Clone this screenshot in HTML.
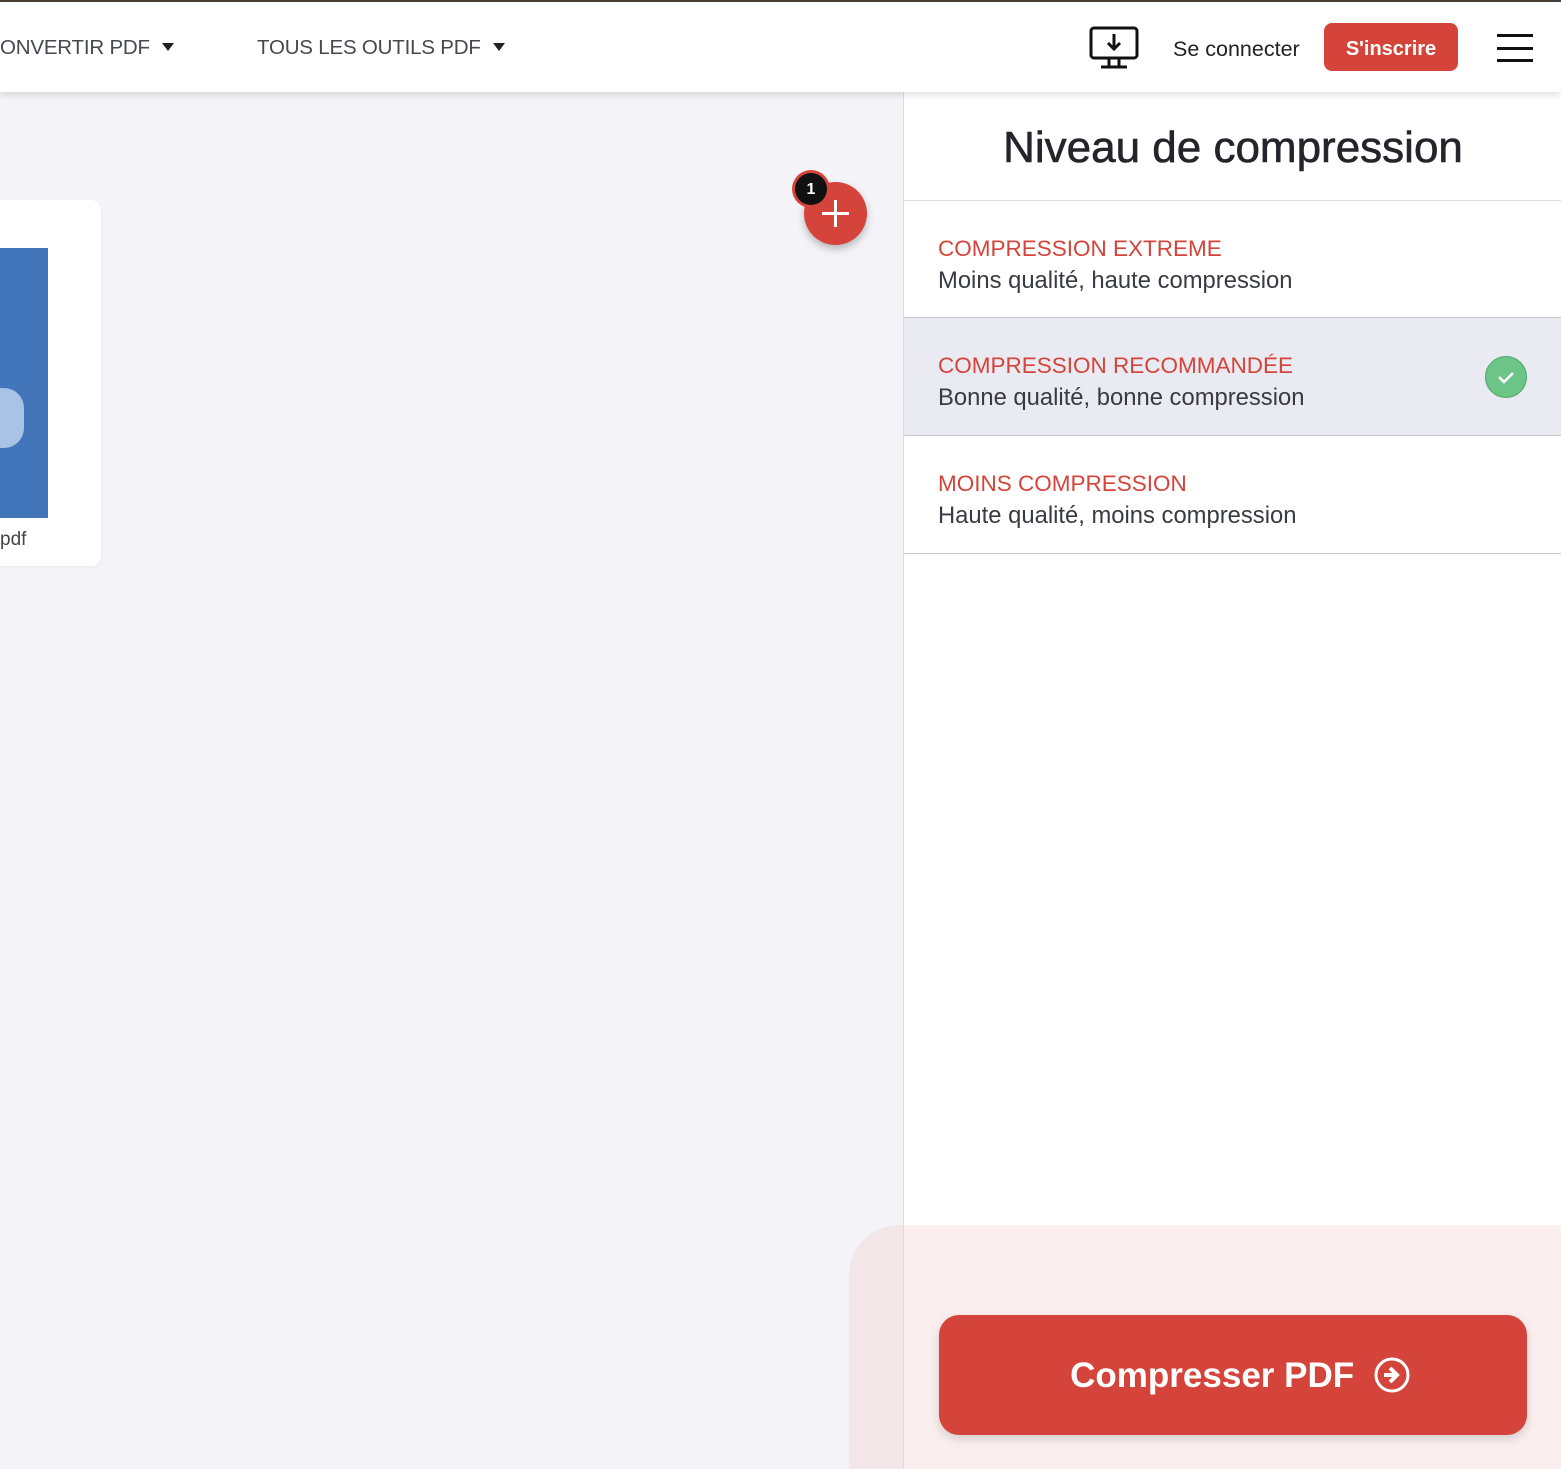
<!DOCTYPE html>
<html><head><meta charset="utf-8"><style>
*{margin:0;padding:0;box-sizing:border-box}
body{width:1561px;height:1469px;overflow:hidden;background:#f4f4f8;font-family:"Liberation Sans",sans-serif;position:relative}
.topline{position:absolute;left:0;top:0;width:1561px;height:2px;background:#4a4038}
.header{position:absolute;left:0;top:2px;width:1561px;height:90px;background:#fff;box-shadow:0 3px 6px rgba(0,0,0,.12);z-index:3}
.nav{position:absolute;top:34px;font-size:20.5px;color:#47474f;white-space:nowrap;letter-spacing:-.2px}
.tri{display:inline-block;width:0;height:0;border-left:6px solid transparent;border-right:6px solid transparent;border-top:8px solid #222;margin-left:12px;vertical-align:3px}
.login{position:absolute;left:1173px;top:35px;font-size:21.5px;color:#222}
.signup{position:absolute;left:1324px;top:21px;width:134px;height:48px;background:#d5443a;border-radius:8px;color:#fff;font-weight:bold;font-size:20px;text-align:center;line-height:52px}
.burger span{position:absolute;left:1497px;width:36px;height:3px;background:#111}
.side{position:absolute;left:903px;top:92px;width:658px;height:1377px;background:#fff;border-left:1px solid #ddd}
.title{position:absolute;left:0;width:658px;top:31px;text-align:center;font-size:44px;color:#24242a;-webkit-text-stroke:.6px #24242a}
.opt{position:absolute;left:0;width:658px;height:118px;border-bottom:1.5px solid #c6c6cc}
.opt .a{position:absolute;left:34px;top:35px;font-size:22.5px;color:#d5443a}
.opt .b{position:absolute;left:34px;top:66px;font-size:23.8px;color:#3a3a44}
.check{position:absolute;left:581px;top:38px;width:42px;height:42px;border-radius:50%;background:#6cc586;border:1px solid #4fa86b}
.footer{position:absolute;left:849px;top:1225px;width:712px;height:244px;background:#faefee;border-top-left-radius:50px}
.footer .l{position:absolute;left:0;top:0;width:54px;height:244px;background:#f3e6e9;border-top-left-radius:50px}
.btn{position:absolute;left:939px;top:1315px;width:588px;height:120px;background:#d5443a;border-radius:20px;box-shadow:0 4px 10px rgba(0,0,0,.15);color:#fff;font-size:35px;font-weight:bold;text-align:center;line-height:122px;padding-left:14px}
.card{position:absolute;left:-20px;top:200px;width:121px;height:366px;background:#fff;border-radius:10px;box-shadow:0 1px 4px rgba(0,0,0,.04)}
.thumb{position:absolute;left:0;top:248px;width:48px;height:270px;background:#4375ba}
.fab{position:absolute;left:804px;top:182px;width:63px;height:63px;border-radius:50%;background:#d5443a;box-shadow:0 4px 8px rgba(0,0,0,.25)}
.badge{position:absolute;left:792px;top:170px;width:38px;height:38px;border-radius:50%;background:#d5443a}
.badge div{position:absolute;left:3px;top:3px;width:32px;height:32px;border-radius:50%;background:#111;color:#fff;font-size:16px;font-weight:bold;text-align:center;line-height:34px}
</style></head><body>
<div class="topline"></div>
<div class="header">
<div class="nav" style="left:0">ONVERTIR PDF<span class="tri"></span></div>
<div class="nav" style="left:257px">TOUS LES OUTILS PDF<span class="tri"></span></div>
<svg style="position:absolute;left:1089px;top:24px" width="52" height="44" viewBox="0 0 52 44"><rect x="2" y="2" width="46" height="30" rx="3" fill="none" stroke="#111" stroke-width="3"/><path d="M25 8v15M19 17l6 6 6-6" fill="none" stroke="#111" stroke-width="3"/><path d="M20 32v8M30 32v8M12 41h26" stroke="#111" stroke-width="3"/></svg>
<div class="login">Se connecter</div>
<div class="signup">S'inscrire</div>
<div class="burger"><span style="top:32px"></span><span style="top:45px"></span><span style="top:57px"></span></div>
</div>
<div class="card"></div>
<div class="thumb"><div style="position:absolute;left:0;top:140px;width:24px;height:60px;background:#a9c3e6;border-radius:0 20px 20px 0"></div></div>
<div style="position:absolute;left:0;top:529px;font-size:19px;color:#444">pdf</div>
<div class="fab"><svg width="63" height="63"><path d="M31.5 18v27M18 31.5h27" stroke="#fff" stroke-width="3"/></svg></div>
<div class="badge"><div>1</div></div>
<div class="side">
<div class="title">Niveau de compression</div>
<div class="opt" style="top:108px;border-top:1px solid #ddd"><div class="a">COMPRESSION EXTREME</div><div class="b">Moins qualité, haute compression</div></div>
<div class="opt" style="top:226px;background:#eaeaf2"><div class="a">COMPRESSION RECOMMANDÉE</div><div class="b">Bonne qualité, bonne compression</div><div class="check"><svg width="40" height="40"><path d="M13 20l5 5 9-9" fill="none" stroke="#fff" stroke-width="2.5"/></svg></div></div>
<div class="opt" style="top:344px"><div class="a">MOINS COMPRESSION</div><div class="b">Haute qualité, moins compression</div></div>
</div>
<div class="footer"><div class="l"></div></div>
<div style="position:absolute;left:903px;top:1225px;width:1px;height:244px;background:#ddd"></div>
<div class="btn">Compresser PDF <svg style="vertical-align:-6px;margin-left:10px" width="36" height="36" viewBox="0 0 36 36"><circle cx="18" cy="18" r="16" fill="none" stroke="#fff" stroke-width="3"/><path d="M10 18h10M16 11l7 7-7 7" fill="none" stroke="#fff" stroke-width="4"/></svg></div>
</body></html>
